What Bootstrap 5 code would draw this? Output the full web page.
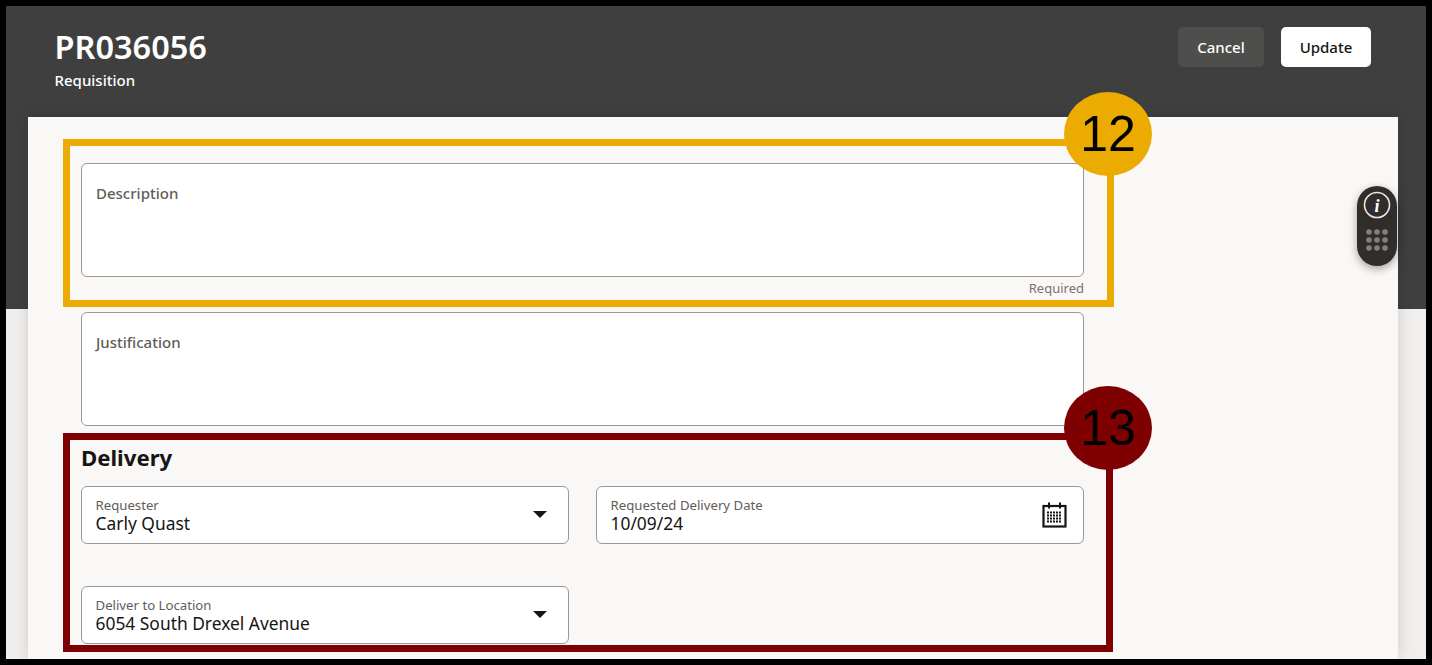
<!DOCTYPE html>
<html lang="en">
<head>
<meta charset="utf-8">
<title>PR036056</title>
<link href="https://cdn.jsdelivr.net/npm/bootstrap@5.3.0/dist/css/bootstrap.min.css" rel="stylesheet">
<style>
html,body{height:100%;overflow:hidden}
body{background:#000;font-family:"Noto Sans","Open Sans",sans-serif;color:#161513}
.stage{position:relative;height:665px}
.frame{position:absolute;left:6px;top:6px;width:1420px;height:653px;overflow:hidden;background:linear-gradient(#3f3f3f 0,#3f3f3f 303px,#f1efed 303px,#f1efed 100%)}
.head{height:111px;padding:21px 55px 0 48.5px}
.pr-title{font-size:32.5px;font-weight:600;line-height:36px;color:#fff;margin:2px 0 0}
.pr-sub{font-size:15px;font-weight:500;color:#fff;line-height:20px;margin-top:5px}
.btn-cancel,.btn-update{height:40px;font-size:15px;font-weight:500;border:0;border-radius:5px;padding:0;font-family:inherit}
.btn-cancel{width:86px;background:#4e4e4d;color:#fff}
.btn-update{width:90px;background:#fff;color:#161513}
.gap-act{gap:17px}
.sheet{margin:0 28px 0 22px;height:542px;background:#f9f8f6;padding:46px 0 0 53px;box-shadow:0 0 14px rgba(0,0,0,.14)}
.formcol{width:1003px}
.field{background:#fff;border:1px solid #9e9892;border-radius:6px}
.area{height:114px;padding:19px 14px}
.flabel{font-size:15px;font-weight:500;color:#615c57;line-height:20px}
.req{font-size:13px;color:#7a736e;line-height:18px;text-align:right;height:35px;padding-top:2px}
.deliv{font-size:22.2px;font-weight:700;line-height:28px;margin:18px 0 14px;color:#161513}
.grid2{display:grid;grid-template-columns:488px 488px;column-gap:27px;row-gap:42px}
.pick{height:58px;padding:10px 14px 0 13.5px;position:relative}
.pick .mini{font-size:13.2px;color:#615c57;line-height:16px}
.pick .val{font-size:17.4px;color:#161513;line-height:20px}
.caret-down{position:absolute;right:21px;top:24px;width:0;height:0;border-left:7.5px solid transparent;border-right:7.5px solid transparent;border-top:7.5px solid #161513}
.cal{position:absolute;right:16px;top:15px}
.mark-box{position:absolute;border-style:solid;border-width:7px;pointer-events:none}
.m12{left:57px;top:133px;width:1051px;height:168px;border-color:#ebab00}
.m13{left:57px;top:427px;width:1050px;height:219px;border-color:#7f0000}
.disc{position:absolute;width:88px;height:84px;border-radius:50%;font-family:"Liberation Sans",Arial,sans-serif;font-size:50px;line-height:84px;text-align:center}
.d12{left:1058px;top:86px;background:#ebab00;color:#000}
.d13{left:1058px;top:380px;height:84px;background:#7f0000;color:#000}
.rail{position:absolute;left:1351px;top:180px;width:40px;height:80px;border-radius:20px;background:#312d2a;box-shadow:0 3px 8px rgba(0,0,0,.35)}
.rail svg{display:block}
</style>
</head>
<body>
<div class="stage">
<div class="frame">
  <header class="head d-flex justify-content-between align-items-start">
    <div>
      <h1 class="pr-title">PR036056</h1>
      <div class="pr-sub">Requisition</div>
    </div>
    <div class="d-flex gap-act">
      <button type="button" class="btn btn-cancel">Cancel</button>
      <button type="button" class="btn btn-update">Update</button>
    </div>
  </header>
  <main class="sheet">
    <div class="formcol">
      <div class="field area"><div class="flabel">Description</div></div>
      <div class="req">Required</div>
      <div class="field area"><div class="flabel">Justification</div></div>
      <h2 class="deliv">Delivery</h2>
      <div class="grid2">
        <div class="field pick">
          <div class="mini">Requester</div>
          <div class="val">Carly Quast</div>
          <span class="caret-down"></span>
        </div>
        <div class="field pick">
          <div class="mini">Requested Delivery Date</div>
          <div class="val">10/09/24</div>
          <svg class="cal" width="25" height="26" viewBox="0 0 25 26" fill="none">
            <rect x="1.5" y="4" width="22" height="20.5" stroke="#161513" stroke-width="2.2" fill="#fff"/>
            <path d="M7 0.5v6M18 0.5v6" stroke="#161513" stroke-width="2"/>
            <path d="M5 10.5h15M5 13.5h15M5 16.5h15M5 19.5h15" stroke="#161513" stroke-width="2" stroke-dasharray="2 1"/>
          </svg>
        </div>
        <div class="field pick">
          <div class="mini">Deliver to Location</div>
          <div class="val">6054 South Drexel Avenue</div>
          <span class="caret-down"></span>
        </div>
      </div>
    </div>
  </main>
  <div class="mark-box m12"></div>
  <div class="disc d12">12</div>
  <div class="mark-box m13"></div>
  <div class="disc d13">13</div>
  <aside class="rail">
    <svg width="40" height="80" viewBox="0 0 40 80">
      <circle cx="20" cy="19" r="12.5" fill="none" stroke="#e9e6e3" stroke-width="1.6"/>
      <text x="20" y="25.5" text-anchor="middle" font-family="Liberation Serif, serif" font-style="italic" font-weight="700" font-size="18" fill="#fff">i</text>
      <g fill="#85807b">
        <circle cx="12" cy="46" r="2.8"/><circle cx="20" cy="46" r="2.8"/><circle cx="28" cy="46" r="2.8"/>
        <circle cx="12" cy="54" r="2.8"/><circle cx="20" cy="54" r="2.8"/><circle cx="28" cy="54" r="2.8"/>
        <circle cx="12" cy="62" r="2.8"/><circle cx="20" cy="62" r="2.8"/><circle cx="28" cy="62" r="2.8"/>
      </g>
    </svg>
  </aside>
</div>
</div>
<script src="https://cdn.jsdelivr.net/npm/bootstrap@5.3.0/dist/js/bootstrap.bundle.min.js"></script>
</body>
</html>
